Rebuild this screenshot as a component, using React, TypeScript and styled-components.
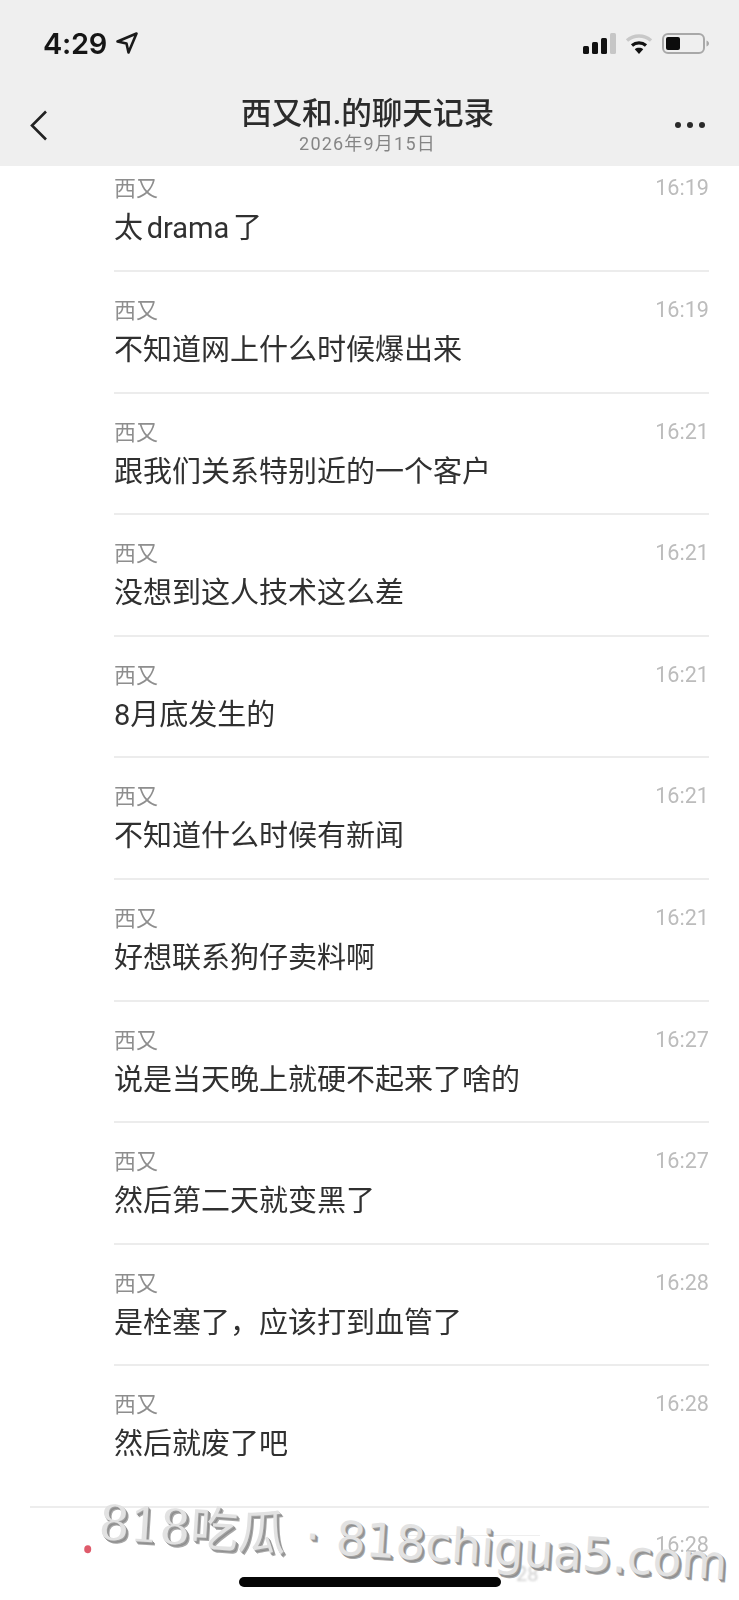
import React from 'react';
import styled, { createGlobalStyle } from 'styled-components';

const CJK = `Roboto, "Noto Sans CJK SC", sans-serif`;

const GlobalStyle = createGlobalStyle`
  html, body { margin: 0; padding: 0; background: #fff; }
  body { font-family: ${CJK}; }
`;

const Page = styled.div`
  position: relative;
  width: 739px;
  height: 1600px;
  overflow: hidden;
  background: #fff;
`;

const Header = styled.header`
  height: 166px;
  background: #efefef;
  display: flex;
  flex-direction: column;
`;

const StatusBar = styled.div`
  height: 54px;
  padding: 16px 30px 0 43px;
  display: flex;
  align-items: center;
  justify-content: space-between;
  filter: blur(0.4px);
`;

const Clock = styled.div`
  display: flex;
  align-items: center;
  gap: 8px;
  font-family: Inter, sans-serif;
  font-size: 29px;
  font-weight: 600;
  color: #161616;
  letter-spacing: -0.3px;
`;

const StatusIcons = styled.div`
  display: flex;
  align-items: center;
  gap: 9px;
`;

const Nav = styled.div`
  flex: 1;
  display: grid;
  grid-template-columns: 1fr auto 1fr;
  align-items: center;
  padding: 14px 34px 0 30px;
`;

const TitleBlock = styled.div`
  display: flex;
  flex-direction: column;
  align-items: center;
`;

const Title = styled.div`
  font-size: 30.6px;
  line-height: 38px;
  font-weight: 500;
  color: #2b2b2b;
  filter: blur(0.4px);
`;

const DateLine = styled.div`
  font-size: 18px;
  line-height: 22px;
  letter-spacing: 1.2px;
  color: #858585;
  filter: blur(0.4px);
`;

const More = styled.div`
  justify-self: end;
  display: flex;
  gap: 6px;
`;

const Dot = styled.span`
  width: 6px;
  height: 6px;
  border-radius: 50%;
  background: #2a2a2a;
`;

const BackButton = styled.div`
  display: flex;
`;

const List = styled.main`
  display: flex;
  flex-direction: column;
  padding-left: 114px;
  padding-right: 30px;
`;

const Row = styled.article<{ $first?: boolean; $last?: boolean }>`
  height: ${({ $first, $last }) => ($first ? '106px' : $last ? '140px' : '121.6px')};
  box-sizing: border-box;
  padding-top: ${({ $first }) => ($first ? '5px' : '21px')};
  border-bottom: ${({ $last }) => ($last ? 'none' : '2px solid #ececec')};
`;

const RowTop = styled.div`
  display: flex;
  justify-content: space-between;
  align-items: center;
  height: 30px;
`;

const Name = styled.span`
  font-size: 22px;
  color: #8e8e8e;
  filter: blur(0.4px);
`;

const Time = styled.span`
  padding-top: 3px;
  font-size: 21.6px;
  color: #bcbcbc;
  filter: blur(0.5px);
`;

const Message = styled.div`
  margin-top: 6px;
  font-size: 29px;
  line-height: 42px;
  word-spacing: -3.5px;
  color: #303030;
  filter: blur(0.4px);
`;

const FullRule = styled.div`
  height: 2px;
  margin-left: -84px;
  background: #ededed;
`;

const LastRow = styled.div`
  display: flex;
  justify-content: flex-end;
  padding-top: 21px;
`;

const Fade = styled.div`
  position: absolute;
  left: 30px;
  top: 1512px;
  width: 430px;
  height: 88px;
  background: linear-gradient(90deg, #fff 85%, rgba(255, 255, 255, 0));
`;

const GhostRule = styled.div`
  position: absolute;
  left: 400px;
  top: 1535px;
  width: 140px;
  height: 1px;
  background: #efefef;
`;

const Ghost = styled.span`
  position: absolute;
  left: 516px;
  top: 1562px;
  font-size: 20px;
  color: #d0d0d0;
  filter: blur(0.8px);
`;

const HomeBar = styled.div`
  position: absolute;
  left: 239px;
  top: 1577px;
  width: 262px;
  height: 10px;
  border-radius: 5px;
  background: #060606;
  filter: blur(0.4px);
`;

const Watermark = styled.div`
  position: absolute;
  left: 86px;
  top: 1491px;
  display: flex;
  align-items: baseline;
  white-space: nowrap;
  transform: rotate(3.7deg);
  transform-origin: left center;
  font-family: "DejaVu Sans", "Noto Sans CJK SC", sans-serif;
  font-size: 47px;
  line-height: 60px;
  color: #e2e2e2;
  text-shadow: 1px 1px 0 #a0a0a0, 2px 2px 0 #8e8e8e, 3px 3px 0 #a8a8a8;
`;

const WatermarkSerif = styled.span`
  font-family: "DejaVu Serif", "Noto Sans CJK SC", serif;
  font-size: 48px;
`;

const RedDot = styled.span`
  align-self: flex-end;
  width: 7px;
  height: 8px;
  margin: 0 6px -1px 0;
  border-radius: 50%;
  background: #df5b6b;
`;

const Sep = styled.span`
  margin: 0 16px 0 19px;
`;

const LocationArrow = () => (
  <svg width="24" height="24" viewBox="0 0 24 24" fill="none" stroke="#1a1a1a" strokeWidth="2.6" strokeLinejoin="round">
    <path d="M2.5 10.5 21.5 2.5 13.5 21.5 11.5 12.5Z" />
  </svg>
);

const Signal = () => (
  <svg width="33" height="21" viewBox="0 0 33 21">
    <rect x="0" y="13" width="6" height="8" rx="1.5" fill="#111" />
    <rect x="9" y="9" width="6" height="12" rx="1.5" fill="#111" />
    <rect x="18" y="5" width="6" height="16" rx="1.5" fill="#111" />
    <rect x="27" y="0" width="6" height="21" rx="1.5" fill="#c6c6c6" />
  </svg>
);

const Wifi = () => (
  <svg width="28" height="21" viewBox="0 0 28 21" fill="none" strokeLinecap="butt">
    <path d="M2 7.5C9 1.5 19 1.5 26 7.5" stroke="#c8c8c8" strokeWidth="3.4" />
    <path d="M7 12.5C11 9 17 9 21 12.5" stroke="#111" strokeWidth="3.2" />
    <path d="M14 21 9.8 16.2C12 14.4 16 14.4 18.2 16.2Z" fill="#111" />
  </svg>
);

const Battery = () => (
  <svg width="47" height="21" viewBox="0 0 47 21">
    <rect x="1" y="1" width="41" height="19" rx="5" fill="none" stroke="#a8a8a8" strokeWidth="2" />
    <rect x="4" y="4" width="14" height="13" rx="2" fill="#0c0c0c" />
    <path d="M44.5 7.5c1.5.5 2.5 1.6 2.5 3s-1 2.5-2.5 3Z" fill="#a8a8a8" />
  </svg>
);

const ChevronBack = () => (
  <svg width="18" height="31" viewBox="0 0 18 31" fill="none" stroke="#222" strokeWidth="2.6">
    <path d="M16 1.5 2 15.5 16 29.5" />
  </svg>
);

const rows = [
  ['太 drama 了', '16:19'],
  ['不知道网上什么时候爆出来', '16:19'],
  ['跟我们关系特别近的一个客户', '16:21'],
  ['没想到这人技术这么差', '16:21'],
  ['8月底发生的', '16:21'],
  ['不知道什么时候有新闻', '16:21'],
  ['好想联系狗仔卖料啊', '16:21'],
  ['说是当天晚上就硬不起来了啥的', '16:27'],
  ['然后第二天就变黑了', '16:27'],
  ['是栓塞了，应该打到血管了', '16:28'],
  ['然后就废了吧', '16:28'],
];

export default function App() {
  return (
    <Page>
      <GlobalStyle />
      <Header>
        <StatusBar>
          <Clock>
            4:29
            <LocationArrow />
          </Clock>
          <StatusIcons>
            <Signal />
            <Wifi />
            <Battery />
          </StatusIcons>
        </StatusBar>
        <Nav>
          <BackButton>
            <ChevronBack />
          </BackButton>
          <TitleBlock>
            <Title>西又和.的聊天记录</Title>
            <DateLine>2026年9月15日</DateLine>
          </TitleBlock>
          <More>
            <Dot />
            <Dot />
            <Dot />
          </More>
        </Nav>
      </Header>
      <List>
        {rows.map(([text, time], i) => (
          <Row key={i} $first={i === 0} $last={i === rows.length - 1}>
            <RowTop>
              <Name>西又</Name>
              <Time>{time}</Time>
            </RowTop>
            <Message>{text}</Message>
          </Row>
        ))}
        <FullRule />
        <LastRow>
          <Time>16:28</Time>
        </LastRow>
      </List>
      <Fade />
      <GhostRule />
      <Ghost>28</Ghost>
      <HomeBar />
      <Watermark>
        <RedDot />
        <WatermarkSerif>818吃瓜</WatermarkSerif>
        <Sep>·</Sep>
        818chigua5.com
      </Watermark>
    </Page>
  );
}
